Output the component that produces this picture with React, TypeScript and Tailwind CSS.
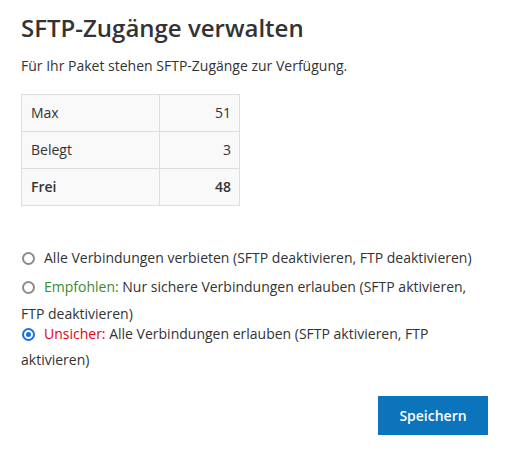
import React from "react";

function Radio({ checked }: { checked?: boolean }) {
  return checked ? (
    <span className="ml-[1px] mr-[9px] flex h-[13px] w-[13px] shrink-0 items-center justify-center rounded-full border-2 border-[#1a6fe3] bg-white">
      <span className="h-[5px] w-[5px] rounded-full bg-[#1a6fe3]" />
    </span>
  ) : (
    <span className="ml-[1px] mr-[9px] h-[13px] w-[13px] shrink-0 rounded-full border-2 border-[#8c8c8c] bg-white" />
  );
}

export default function App() {
  return (
    <div
      className="w-[522px] min-h-[454px] bg-white pl-[21px] pr-[34px] pt-[12px] text-[#333]"
      style={{ fontFamily: '"Open Sans", "Liberation Sans", sans-serif' }}
    >
      <h1 className="text-[24px] leading-[32px] font-semibold text-[#333]">SFTP-Zugänge verwalten</h1>
      <p className="mt-[12px] text-[14px] leading-[20px]">Für Ihr Paket stehen SFTP-Zugänge zur Verfügung.</p>

      <table className="mt-[18px] border-collapse text-[14px] leading-[20px] bg-[#f9f9f9]">
        <tbody>
          <tr className="h-[37px]">
            <td className="w-[138px] border border-[#ddd] px-[9px] py-0">Max</td>
            <td className="w-[80px] border border-[#ddd] px-[8px] py-0 text-right">51</td>
          </tr>
          <tr className="h-[37px]">
            <td className="border border-[#ddd] px-[9px] py-0">Belegt</td>
            <td className="border border-[#ddd] px-[8px] py-0 text-right">3</td>
          </tr>
          <tr className="h-[37px] font-semibold">
            <td className="border border-[#ddd] px-[9px] py-0">Frei</td>
            <td className="border border-[#ddd] px-[8px] py-0 text-right">48</td>
          </tr>
        </tbody>
      </table>

      <div className="mt-[42px] text-[14px] leading-[20px]">
        <div className="h-[27px]">
          <label className="flex h-5 items-center">
            <Radio />
            <span>Alle Verbindungen verbieten (SFTP deaktivieren, FTP deaktivieren)</span>
          </label>
        </div>
        <div className="mt-[2px]">
          <label className="flex h-[27px] items-start">
            <span className="flex h-5 items-center">
              <Radio />
              <span>
                <span className="text-[#3b8a2f]">Empfohlen:</span> Nur sichere Verbindungen erlauben (SFTP aktivieren,
              </span>
            </span>
          </label>
          <div className="h-5">FTP deaktivieren)</div>
        </div>
        <div>
          <label className="flex h-[26px] items-start">
            <span className="flex h-5 items-center">
              <Radio checked />
              <span>
                <span className="text-[#e3000f]">Unsicher:</span> Alle Verbindungen erlauben (SFTP aktivieren, FTP
              </span>
            </span>
          </label>
          <div className="h-5">aktivieren)</div>
        </div>
      </div>

      <div className="mt-[26px] flex justify-end">
        <button className="h-[39px] w-[110px] bg-[#0b74bb] text-[14px] font-semibold text-white">Speichern</button>
      </div>
    </div>
  );
}
